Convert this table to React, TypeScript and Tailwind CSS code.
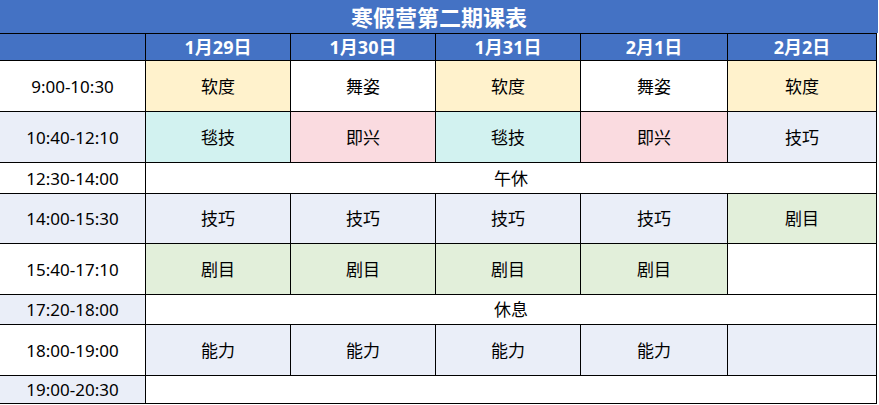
const days = ["1月29日", "1月30日", "1月31日", "2月1日", "2月2日"]

type Cell = { text: string; bg: string }

const Y = "bg-[#fff2cc]"
const W = "bg-white"
const T = "bg-[#d2f2f0]"
const P = "bg-[#fadbe0]"
const B = "bg-[#eaeef8]"
const G = "bg-[#e2efda]"

const rows: { time: string; timeBg: string; h: string; cells?: Cell[]; merged?: string }[] = [
  {
    time: "9:00-10:30",
    timeBg: W,
    h: "h-[50px]",
    cells: [
      { text: "软度", bg: Y },
      { text: "舞姿", bg: W },
      { text: "软度", bg: Y },
      { text: "舞姿", bg: W },
      { text: "软度", bg: Y },
    ],
  },
  {
    time: "10:40-12:10",
    timeBg: B,
    h: "h-[50px]",
    cells: [
      { text: "毯技", bg: T },
      { text: "即兴", bg: P },
      { text: "毯技", bg: T },
      { text: "即兴", bg: P },
      { text: "技巧", bg: B },
    ],
  },
  { time: "12:30-14:00", timeBg: W, h: "h-[30px]", merged: "午休" },
  {
    time: "14:00-15:30",
    timeBg: B,
    h: "h-[49px]",
    cells: [
      { text: "技巧", bg: B },
      { text: "技巧", bg: B },
      { text: "技巧", bg: B },
      { text: "技巧", bg: B },
      { text: "剧目", bg: G },
    ],
  },
  {
    time: "15:40-17:10",
    timeBg: W,
    h: "h-[50px]",
    cells: [
      { text: "剧目", bg: G },
      { text: "剧目", bg: G },
      { text: "剧目", bg: G },
      { text: "剧目", bg: G },
      { text: "", bg: W },
    ],
  },
  { time: "17:20-18:00", timeBg: B, h: "h-[29px]", merged: "休息" },
  {
    time: "18:00-19:00",
    timeBg: W,
    h: "h-[50px]",
    cells: [
      { text: "能力", bg: B },
      { text: "能力", bg: B },
      { text: "能力", bg: B },
      { text: "能力", bg: B },
      { text: "", bg: B },
    ],
  },
  { time: "19:00-20:30", timeBg: B, h: "h-[27px]", merged: "" },
]

export default function App() {
  return (
    <div className="h-[405px] w-[879px] bg-white font-['Noto_Sans','Noto_Sans_CJK_SC',sans-serif] text-[17px] leading-none text-black">
      <div className="flex h-[33px] w-[878px] items-center justify-center bg-[#4472c4] text-[22px] font-bold text-white">
        寒假营第二期课表
      </div>
      <div className="grid w-[877px] grid-cols-[145px_144px_144px_144px_146px_148px] gap-px border-y border-r border-black bg-black">
        <div className="h-[26px] bg-[#4472c4]" />
        {days.map((d) => (
          <div key={d} className="flex h-[26px] items-center justify-center bg-[#4472c4] text-[18px] font-bold text-white">
            {d}
          </div>
        ))}
        {rows.map((r) => (
          <div key={r.time} className="contents">
            <div className={`flex ${r.h} items-center justify-center ${r.timeBg}`}>{r.time}</div>
            {r.cells ? (
              r.cells.map((c, i) => (
                <div key={i} className={`flex items-center justify-center ${c.bg}`}>
                  {c.text}
                </div>
              ))
            ) : (
              <div className="col-span-5 flex items-center justify-center bg-white">{r.merged}</div>
            )}
          </div>
        ))}
      </div>
    </div>
  )
}
